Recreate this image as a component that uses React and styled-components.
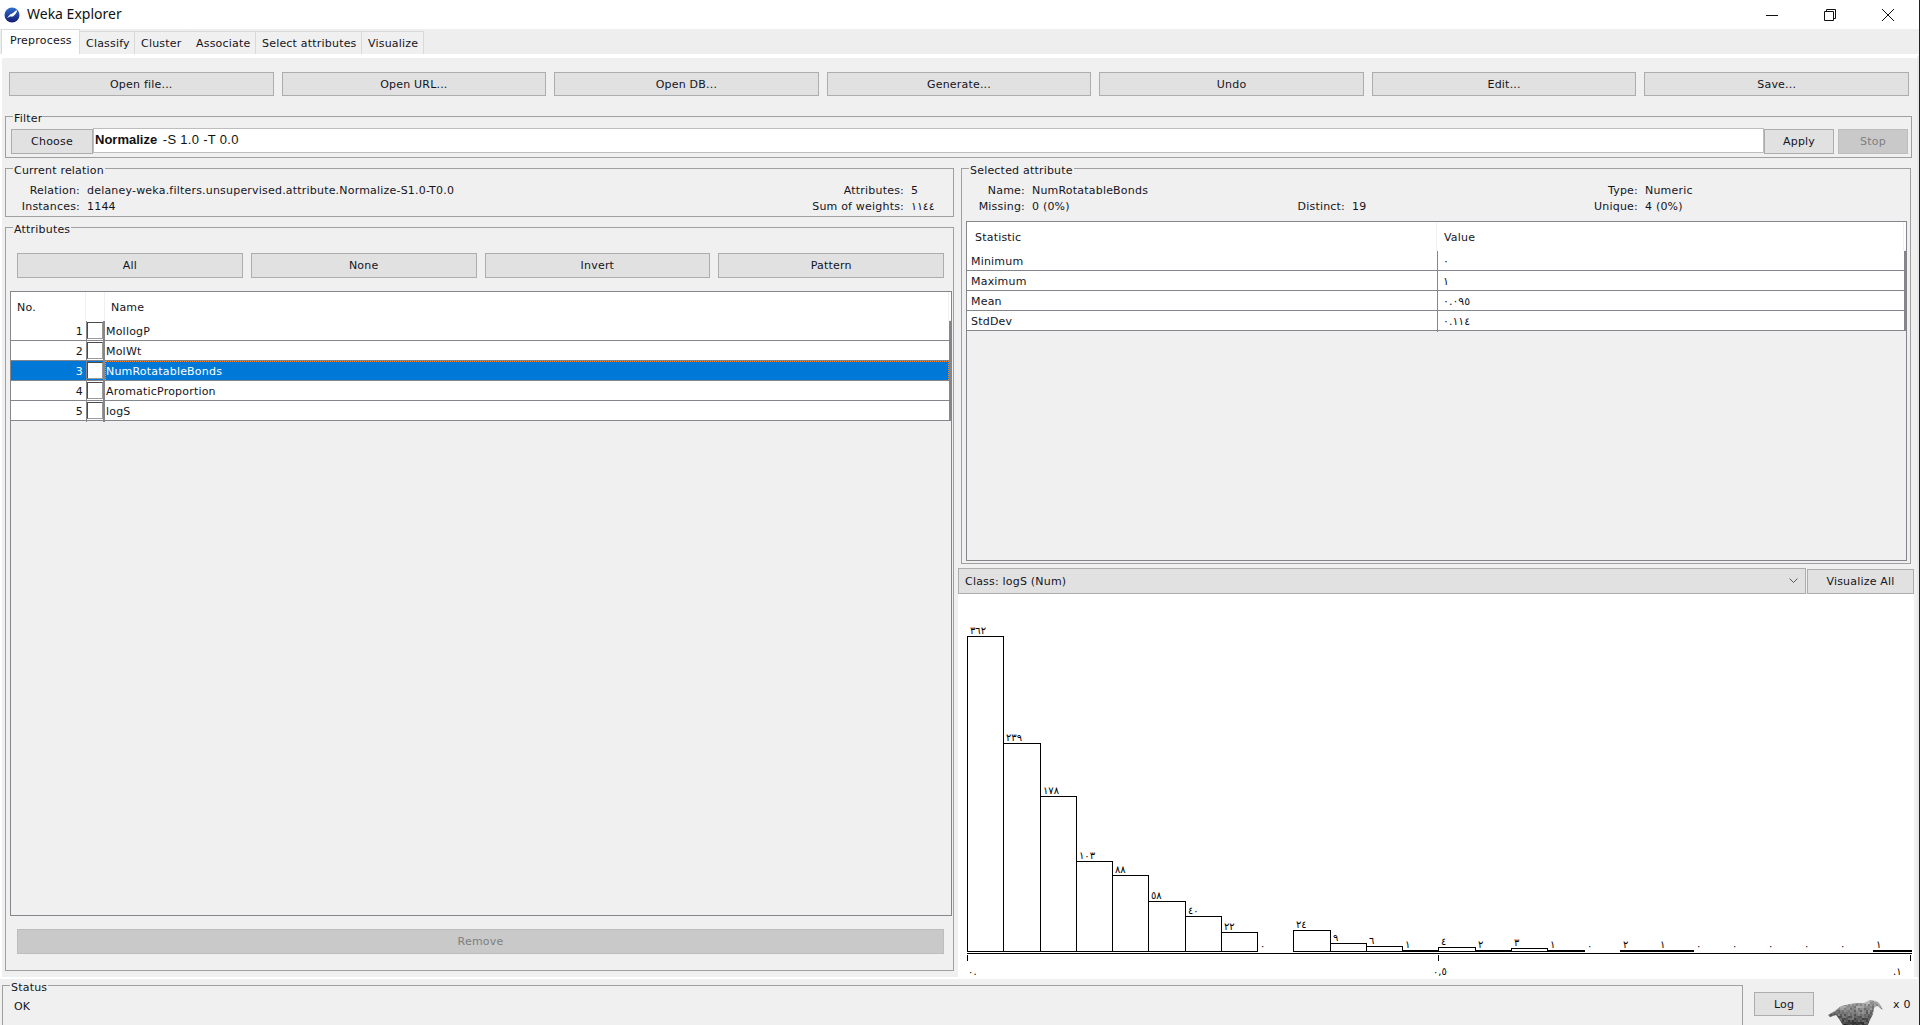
import React from "react";
import styled, { createGlobalStyle } from "styled-components";

const Global = createGlobalStyle`
  html, body { margin: 0; padding: 0; background: #f0f0f0; }
  #root { width: 1920px; height: 1025px; overflow: hidden; }
`;

const Window = styled.div`
  width: 1920px; height: 1025px; display: flex; flex-direction: column; overflow: hidden;
  font-family: "DejaVu Sans", sans-serif; font-size: 11px; color: #14141c; letter-spacing: 0.2px;
  border-right: 1px solid #222; box-sizing: border-box; background: #eeeeee;
`;
const TitleBar = styled.header`
  height: 29px; background: #fff; display: flex; align-items: center; flex: none; margin-right: -1px;
`;
const TitleIcon = styled.svg` width: 16px; height: 16px; margin: 0 7px 0 4px; `;
const TitleText = styled.div`
  flex: 1; font: 14px "Noto Sans", sans-serif; letter-spacing: 0; color: #111; position: relative; top: -1px;
`;
const Caption = styled.button`
  width: 58px; height: 29px; border: 0; background: none; padding: 0; display: flex;
  align-items: center; justify-content: center;
`;
const CaptionEnd = styled.div` width: 3px; `;

const TabStrip = styled.nav`
  height: 25px; flex: none; display: flex; align-items: flex-end; padding-left: 1px; background: #eeeeee;
`;
const Tab = styled.div`
  box-sizing: border-box; width: ${(p) => p.$w}px; height: ${(p) => (p.$active ? 25 : 23)}px;
  padding: ${(p) => (p.$active ? "3px 0 0 8px" : "4px 0 0 6px")}; line-height: 16px;
  background: ${(p) => (p.$active ? "#fff" : "#f0f0f0")};
  border: 1px solid #d9d9d9; border-left-width: ${(p) => (p.$active ? 1 : 0)}px;
  border-right-color: ${(p) => (p.$plain ? "#f0f0f0" : "#d9d9d9")};
  border-bottom: 0; white-space: nowrap;
`;

const Panel = styled.main`
  flex: 1; min-height: 0; box-sizing: border-box; display: flex; flex-direction: column;
  background: #f0f0f0; border: 2px solid #fff; border-top-width: 4px; border-right-color: #e8e8e8;
  padding-top: 14px; position: relative; z-index: 1;
`;
const Btn = styled.button`
  box-sizing: border-box; height: ${(p) => p.$h || 24}px; padding: 0; font: inherit; letter-spacing: 0.2px;
  background: ${(p) => (p.disabled ? "#c9c9c9" : "#e1e1e1")};
  color: ${(p) => (p.disabled ? "#7f7f7f" : "#14141c")};
  border: 1px solid ${(p) => (p.disabled ? "#bdbdbd" : "#adadad")}; border-radius: 0;
  width: ${(p) => (p.$w ? `${p.$w}px` : "auto")}; flex: none;
`;
const FileRow = styled.div`
  display: grid; grid-template-columns: repeat(7, 1fr); column-gap: 8px; width: 1900px; margin: 0 0 20px 7px;
`;
const Group = styled.section`
  position: relative; box-sizing: border-box; border: 1px solid #a0a0a0;
`;
const Legend = styled.span`
  position: absolute; top: -6px; left: 7px; padding: 0 1px; background: #f0f0f0; line-height: 15px;
`;
const FilterGroup = styled(Group)`
  height: 42px; margin: 0 5px 10px 3px; padding: 12px 3px 0 5px; display: flex; align-items: flex-start;
`;
const FilterField = styled.div`
  flex: 1; height: 25px; box-sizing: border-box; margin-top: -1px; border: 1px solid #bdbdbd; background: #fff;
  padding-left: 1px; font: 13px/22px "Liberation Sans", sans-serif; letter-spacing: 0; color: #111; white-space: pre;
`;
const FilterArgs = styled.span` margin-left: 2px; letter-spacing: 0.3px; `;
const FilterGap = styled.div` width: 4px; flex: none; `;
const Columns = styled.div`
  flex: 1; min-height: 0; display: grid; grid-template-columns: 949px 956px; column-gap: 4px; padding-left: 3px;
`;
const LeftCol = styled.div` display: flex; flex-direction: column; padding-bottom: 6px; min-height: 0; `;
const RightCol = styled.div` display: flex; flex-direction: column; min-height: 0; `;

const InfoGroup = styled(Group)`
  height: 49px; margin-bottom: 10px; padding-top: 13px; display: flex; justify-content: space-between; flex: none;
`;
const Info = styled.div`
  display: grid; grid-template-columns: ${(p) => p.$cols}; column-gap: 7px; grid-auto-rows: 16px; line-height: 17px;
`;
const Lab = styled.span` text-align: right; white-space: nowrap; `;
const Val = styled.span` white-space: nowrap; `;

const AttrGroup = styled(Group)`
  flex: 1; min-height: 0; display: flex; flex-direction: column; padding: 25px 1px 16px 4px;
`;
const AttrButtons = styled.div`
  display: grid; grid-template-columns: repeat(4, 1fr); column-gap: 8px; margin: 0 8px 13px 7px; flex: none;
`;
const Table = styled.div`
  box-sizing: border-box; border: 1px solid #85858c; background: #f0f0f0; display: flex; flex-direction: column;
`;
const AttrTable = styled(Table)` flex: 1; min-height: 0; margin-bottom: 13px; `;
const RemoveWrap = styled.div` margin: 0 8px 0 7px; display: grid; flex: none; `;
const THead = styled.div`
  height: 29px; flex: none; background: #fff; display: grid; grid-template-columns: ${(p) => p.$cols};
  border-bottom: 1px solid #ececec; box-sizing: border-box; line-height: 31px; padding-right: 2px;
`;
const TH = styled.div`
  padding-left: ${(p) => p.$pad}px; border-right: 1px solid #f0f0f0; background: #fff;
`;
const TRow = styled.div`
  height: 20px; box-sizing: border-box; display: grid; grid-template-columns: ${(p) => p.$cols}; flex: none;
  background: ${(p) => (p.$sel ? "#0078d7" : "#fff")}; color: ${(p) => (p.$sel ? "#fff" : "inherit")};
  border-bottom: 1px solid #85858c; border-right: 2px solid #85858c; line-height: 21px;
`;
const NumCell = styled.div` text-align: right; padding-right: 3px; `;
const CheckCell = styled.div`
  border-left: 1px solid #85858c; border-right: 2px solid #85858c; display: flex; justify-content: center;
  padding-top: 1px;
`;
const Check = styled.div`
  box-sizing: border-box; width: 16px; height: 17px; background: #fff; border: 1px solid #4a4a4a;
  border-right-color: #9a9a9a; border-bottom-color: #9a9a9a;
`;
const NameCell = styled.div`
  padding-left: 1px;
  ${(p) => p.$sel && "outline: 1px dotted #ff8a2a; outline-offset: -1px;"}
`;
const StatCell = styled.div`
  padding-left: ${(p) => p.$pad}px; ${(p) => p.$line && "border-left: 1px solid #85858c;"}
`;

const SelGroup = styled(Group)`
  height: 396px; flex: none; margin: 0 3px 4px 3px; padding: 13px 3px 2px 4px; display: flex; flex-direction: column;
`;
const SelInfo = styled(Info)` margin: 0 0 7px 0; flex: none; `;
const StatTable = styled(Table)` flex: 1; min-height: 0; `;

const ClassRow = styled.div` height: 26px; flex: none; display: flex; align-items: center; column-gap: 1px; `;
const Combo = styled.div`
  flex: 1; height: 26px; box-sizing: border-box; background: #e1e1e1; border: 1px solid #adadad;
  display: flex; align-items: center; justify-content: space-between; padding: 0 7px 0 6px;
`;
const Chart = styled.svg`
  display: block; flex: 1; min-height: 0; width: 956px; background: #fff;
`;
const BinLabel = styled.text`
  font-family: "DejaVu Sans", sans-serif; font-size: 10px; fill: #000; direction: ltr; letter-spacing: 0;
`;

const StatusBar = styled.footer`
  flex: none; box-sizing: border-box; height: 46px; display: flex; align-items: flex-start; background: #f0f0f0;
  padding: 4px 0 0 2px; overflow: hidden; position: relative; z-index: 0;
`;
const StatusGroup = styled(Group)`
  box-sizing: border-box; width: 1741px; height: 70px; flex: none; margin-top: 2px; padding: 13px 0 0 11px;
  line-height: 16px;
`;
const LogWrap = styled.div` margin: 9px 14px 0 11px; flex: none; `;
const Bird = styled.svg` width: 56px; height: 27px; margin-top: 17px; flex: none; `;
const Count = styled.div` margin: 15px 0 0 9px; line-height: 14px; white-space: nowrap; `;

const edges = [967, 1003, 1040, 1076, 1112, 1148, 1185, 1221, 1257, 1293, 1330, 1366, 1402, 1438, 1475, 1511, 1547, 1584, 1620, 1657, 1693, 1729, 1765, 1801, 1837, 1873, 1911];
const bins = [
  ["٣٦٢", 636], ["٢٣٩", 743], ["١٧٨", 796], ["١٠٣", 861], ["٨٨", 875], ["٥٨", 901], ["٤٠", 916], ["٢٢", 932],
  ["٠", 951], ["٢٤", 930], ["٩", 943], ["٦", 946], ["١", 950], ["٤", 947], ["٢", 950], ["٣", 948], ["١", 950],
  ["٠", 951], ["٢", 950], ["١", 950], ["٠", 951], ["٠", 951], ["٠", 951], ["٠", 951], ["٠", 951], ["١", 950],
];
const OX = 958, OY = 594;

const Histogram = () => (
  <Chart viewBox="0 0 956 383" shapeRendering="crispEdges">
    {bins.map(([label, top], i) => {
      const x = edges[i] - OX, w = edges[i + 1] - edges[i], y = top - OY;
      return (
        <g key={i}>
          <rect x={x + 0.5} y={y + 0.5} width={w} height={951 - top} fill="#fff" stroke="#000" />
          <BinLabel x={x + 3} y={y - 2}>{label}</BinLabel>
        </g>
      );
    })}
    <line x1={967 - OX} x2={1912 - OX} y1={953.5 - OY} y2={953.5 - OY} stroke="#000" />
    {[967, 1438, 1910].map((x) => (
      <line key={x} x1={x - OX + 0.5} x2={x - OX + 0.5} y1={955 - OY} y2={961 - OY} stroke="#000" />
    ))}
    <BinLabel x={968 - OX} y={975 - OY} letterSpacing="1">٠.</BinLabel>
    <BinLabel x={1433 - OX} y={975 - OY} letterSpacing="4">٠,٥</BinLabel>
    <BinLabel x={1893 - OX} y={975 - OY} letterSpacing="10">.١</BinLabel>
  </Chart>
);

const hash = (i, j) => ((i * 73 + j * 151 + ((i * j) % 13) * 41) % 100) / 100;
const speck = [];
for (let i = 0; i < 28; i++) {
  for (let j = 0; j < 14; j++) {
    const depth = j / 13;
    const g = Math.round(170 - depth * 115 + (hash(i, j) - 0.5) * 60);
    speck.push(<rect key={`${i}-${j}`} x={i * 2} y={j * 2} width="2.1" height="2.1" fill={`rgb(${g},${g},${g})`} />);
  }
}

const BirdIcon = () => (
  <Bird viewBox="0 0 56 27">
    <defs>
      <clipPath id="birdShape">
        <path d="M0 15 L7 11 L13 6 L22 4 L30 3 L36 3 L42 0 L48 1 L51 3 L55 10 L49 6 L46 8 L45 14 L42 20 L39 27 L16 27 L11 19 L8 15 L2 17 Z" />
      </clipPath>
    </defs>
    <g clipPath="url(#birdShape)" shapeRendering="crispEdges">{speck}</g>
  </Bird>
);

const stats = [["Minimum", "٠"], ["Maximum", "١"], ["Mean", "٠.٠٩٥"], ["StdDev", "٠.١١٤"]];
const attrs = ["MollogP", "MolWt", "NumRotatableBonds", "AromaticProportion", "logS"];
const attrCols = "75px 19px 1fr";
const statCols = "470px 1fr";

export default function App() {
  return (
    <Window>
      <Global />
      <TitleBar>
        <TitleIcon viewBox="0 0 16 16">
          <defs>
            <linearGradient id="orb" x1="0" y1="0" x2="0" y2="1">
              <stop offset="0" stopColor="#2f6fd0" />
              <stop offset="1" stopColor="#141a70" />
            </linearGradient>
          </defs>
          <circle cx="8" cy="8" r="7.5" fill="url(#orb)" />
          <path d="M3 11 L6 7.5 L9 6 L12.5 3 L13 4.5 L11.5 7 L9 9.5 L6 9.5 Z" fill="#fff" />
        </TitleIcon>
        <TitleText>Weka Explorer</TitleText>
        <Caption aria-label="Minimize">
          <svg width="14" height="14" viewBox="0 0 14 14"><path d="M1 7.5H13" stroke="#111" fill="none" /></svg>
        </Caption>
        <Caption aria-label="Restore">
          <svg width="14" height="14" viewBox="0 0 14 14"><path d="M1.5 3.5H10.5V12.5H1.5Z M3.5 3.5V1.5H12.5V10.5H10.5" stroke="#111" fill="none" /></svg>
        </Caption>
        <Caption aria-label="Close">
          <svg width="14" height="14" viewBox="0 0 14 14"><path d="M1 1L13 13M13 1L1 13" stroke="#111" fill="none" /></svg>
        </Caption>
        <CaptionEnd />
      </TitleBar>
      <TabStrip>
        <Tab $active $w={79}>Preprocess</Tab>
        <Tab $w={55}>Classify</Tab>
        <Tab $w={55} $plain>Cluster</Tab>
        <Tab $w={66}>Associate</Tab>
        <Tab $w={106}>Select attributes</Tab>
        <Tab $w={62}>Visualize</Tab>
      </TabStrip>
      <Panel>
        <FileRow>
          {["Open file...", "Open URL...", "Open DB...", "Generate...", "Undo", "Edit...", "Save..."].map((t) => (
            <Btn key={t}>{t}</Btn>
          ))}
        </FileRow>
        <FilterGroup>
          <Legend>Filter</Legend>
          <Btn $w={82} $h={25}>Choose</Btn>
          <FilterField><b>Normalize</b> <FilterArgs>-S 1.0 -T 0.0</FilterArgs></FilterField>
          <Btn $w={70} $h={25}>Apply</Btn>
          <FilterGap />
          <Btn $w={70} $h={25} disabled>Stop</Btn>
        </FilterGroup>
        <Columns>
          <LeftCol>
            <InfoGroup>
              <Legend>Current relation</Legend>
              <Info $cols="74px auto">
                <Lab>Relation:</Lab><Val>delaney-weka.filters.unsupervised.attribute.Normalize-S1.0-T0.0</Val>
                <Lab>Instances:</Lab><Val>1144</Val>
              </Info>
              <Info $cols="auto 42px">
                <Lab>Attributes:</Lab><Val>5</Val>
                <Lab>Sum of weights:</Lab><Val>١١٤٤</Val>
              </Info>
            </InfoGroup>
            <AttrGroup>
              <Legend>Attributes</Legend>
              <AttrButtons>
                {["All", "None", "Invert", "Pattern"].map((t) => <Btn key={t} $h={25}>{t}</Btn>)}
              </AttrButtons>
              <AttrTable>
                <THead $cols={attrCols}>
                  <TH $pad={6}>No.</TH><TH $pad={0} /><TH $pad={6}>Name</TH>
                </THead>
                {attrs.map((name, i) => (
                  <TRow key={name} $cols={attrCols} $sel={i === 2}>
                    <NumCell>{i + 1}</NumCell>
                    <CheckCell><Check /></CheckCell>
                    <NameCell $sel={i === 2}>{name}</NameCell>
                  </TRow>
                ))}
              </AttrTable>
              <RemoveWrap><Btn $h={25} disabled>Remove</Btn></RemoveWrap>
            </AttrGroup>
          </LeftCol>
          <RightCol>
            <SelGroup>
              <Legend>Selected attribute</Legend>
              <SelInfo $cols="59px 256px 50px 229px 50px auto">
                <Lab>Name:</Lab><Val>NumRotatableBonds</Val>
                <Lab /><Val />
                <Lab>Type:</Lab><Val>Numeric</Val>
                <Lab>Missing:</Lab><Val>0 (0%)</Val>
                <Lab>Distinct:</Lab><Val>19</Val>
                <Lab>Unique:</Lab><Val>4 (0%)</Val>
              </SelInfo>
              <StatTable>
                <THead $cols={statCols}>
                  <TH $pad={8}>Statistic</TH><TH $pad={7}>Value</TH>
                </THead>
                {stats.map(([k, v]) => (
                  <TRow key={k} $cols={statCols}>
                    <StatCell $pad={4}>{k}</StatCell>
                    <StatCell $pad={5} $line>{v}</StatCell>
                  </TRow>
                ))}
              </StatTable>
            </SelGroup>
            <ClassRow>
              <Combo>
                <span>Class: logS (Num)</span>
                <svg width="9" height="6" viewBox="0 0 9 6"><path d="M0.5 0.5L4.5 4.5L8.5 0.5" stroke="#555" fill="none" /></svg>
              </Combo>
              <Btn $w={107} $h={25}>Visualize All</Btn>
            </ClassRow>
            <Histogram />
          </RightCol>
        </Columns>
      </Panel>
      <StatusBar>
        <StatusGroup>
          <Legend>Status</Legend>
          OK
        </StatusGroup>
        <LogWrap><Btn $w={60}>Log</Btn></LogWrap>
        <BirdIcon />
        <Count>x 0</Count>
      </StatusBar>
    </Window>
  );
}
